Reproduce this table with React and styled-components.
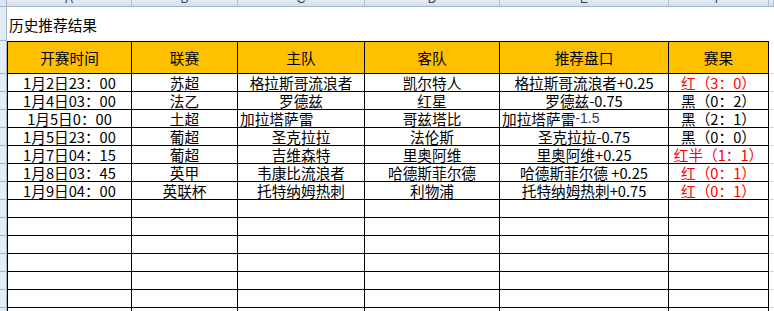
import React from 'react';
import styled, { createGlobalStyle } from 'styled-components';

const GlobalStyle = createGlobalStyle`
  html, body { margin: 0; padding: 0; background: #fff; overflow: hidden; }
  body { font-family: "Noto Sans CJK SC", sans-serif; }
  * { box-sizing: border-box; }
`;

const Sheet = styled.div`
  display: grid;
  grid-template-columns: 7px 125px 106px 127px 135px 169px 100px 1fr;
  grid-template-rows: 7px 34px 33px;
  grid-auto-rows: 18px;
  width: 774px;
  height: 311px;
  overflow: hidden;
  font-family: "Noto Sans CJK SC", sans-serif;
  font-size: 14.67px;
  color: #000;
`;

const Corner = styled.div`
  background: #dfe6ef;
  border-right: 1px solid #9eb6ce;
  border-bottom: 1px solid #9eb6ce;
`;

const ColHead = styled.div`
  background: linear-gradient(#e4eaf2, #d6dfea);
  border-right: 1px solid #b3c0d1;
  border-bottom: 1px solid #9eb6ce;
  overflow: hidden;
  display: flex;
  justify-content: center;
  align-items: flex-start;
  font-family: "Liberation Sans", sans-serif;
  font-size: 12px;
  line-height: 12px;
  color: #3a4656;
  span { margin-top: -7px; }
`;

const RowHead = styled.div`
  background: #e4ecf7;
  border-right: 1px solid #9eb6ce;
  border-bottom: 1px solid #9eb6ce;
`;

const Title = styled.div`
  grid-column: span 6;
  display: flex;
  align-items: center;
  padding-left: 2px;
  padding-top: 1px;
`;

const Blank = styled.div`
  border-bottom: 1px solid ${p => (p.$grid ? '#d0d7e5' : 'transparent')};
`;

const Cell = styled.div`
  display: flex;
  align-items: center;
  justify-content: ${p => (p.$left ? 'flex-start' : 'center')};
  padding-left: ${p => (p.$left ? '2px' : '0')};
  white-space: nowrap;
  overflow: hidden;
  line-height: 17px;
  border-right: 1px solid #000;
  border-bottom: 1px solid #000;
  border-left: ${p => (p.$first ? '1px solid #000' : '0')};
  border-top: ${p => (p.$head ? '1px solid #000' : '0')};
  background: ${p => (p.$head ? '#ffc000' : '#fff')};
  color: ${p => (p.$red ? '#ff0000' : '#000')};
  padding-bottom: ${p => (p.$head ? '1px' : '0')};
`;

const Odds = styled.span`
  font-family: "Liberation Sans", sans-serif;
  font-size: 14px;
  color: #2a3a58;
`;

const letters = ['A', 'B', 'C', 'D', 'E', 'F'];
const headers = ['开赛时间', '联赛', '主队', '客队', '推荐盘口', '赛果'];

const rows = [
  { t: '1月2日23：00', l: '苏超', h: '格拉斯哥流浪者', a: '凯尔特人', p: '格拉斯哥流浪者+0.25', r: '红（3：0）', red: true },
  { t: '1月4日03：00', l: '法乙', h: '罗德兹', a: '红星', p: '罗德兹-0.75', r: '黑（0：2）' },
  { t: '1月5日0：00', l: '土超', h: '加拉塔萨雷', a: '哥兹塔比', p: '加拉塔萨雷', odds: '-1.5', r: '黑（2：1）', left: true },
  { t: '1月5日23：00', l: '葡超', h: '圣克拉拉', a: '法伦斯', p: '圣克拉拉-0.75', r: '黑（0：0）' },
  { t: '1月7日04：15', l: '葡超', h: '吉维森特', a: '里奥阿维', p: '里奥阿维+0.25', r: '红半（1：1）', red: true },
  { t: '1月8日03：45', l: '英甲', h: '韦康比流浪者', a: '哈德斯菲尔德', p: '哈德斯菲尔德 +0.25', r: '红（0：1）', red: true },
  { t: '1月9日04：00', l: '英联杯', h: '托特纳姆热刺', a: '利物浦', p: '托特纳姆热刺+0.75', r: '红（0：1）', red: true },
];

export default function App() {
  return (
    <>
      <GlobalStyle />
      <Sheet>
        <Corner />
        {letters.map(c => (
          <ColHead key={c}><span>{c}</span></ColHead>
        ))}
        <ColHead />

        <RowHead />
        <Title>历史推荐结果</Title>
        <Blank />

        <RowHead />
        {headers.map((h, i) => (
          <Cell key={h} $head $first={i === 0}>{h}</Cell>
        ))}
        <Blank $grid />

        {rows.map((r, i) => (
          <React.Fragment key={i}>
            <RowHead />
            <Cell $first>{r.t}</Cell>
            <Cell>{r.l}</Cell>
            <Cell $left={r.left}>{r.h}</Cell>
            <Cell>{r.a}</Cell>
            <Cell $left={r.left}>
              {r.p}
              {r.odds && <Odds>{r.odds}</Odds>}
            </Cell>
            <Cell $red={r.red}>{r.r}</Cell>
            <Blank $grid />
          </React.Fragment>
        ))}

        {Array.from({ length: 7 }).map((_, i) => (
          <React.Fragment key={`e${i}`}>
            <RowHead />
            <Cell $first />
            <Cell />
            <Cell />
            <Cell />
            <Cell />
            <Cell />
            <Blank $grid />
          </React.Fragment>
        ))}
      </Sheet>
    </>
  );
}
